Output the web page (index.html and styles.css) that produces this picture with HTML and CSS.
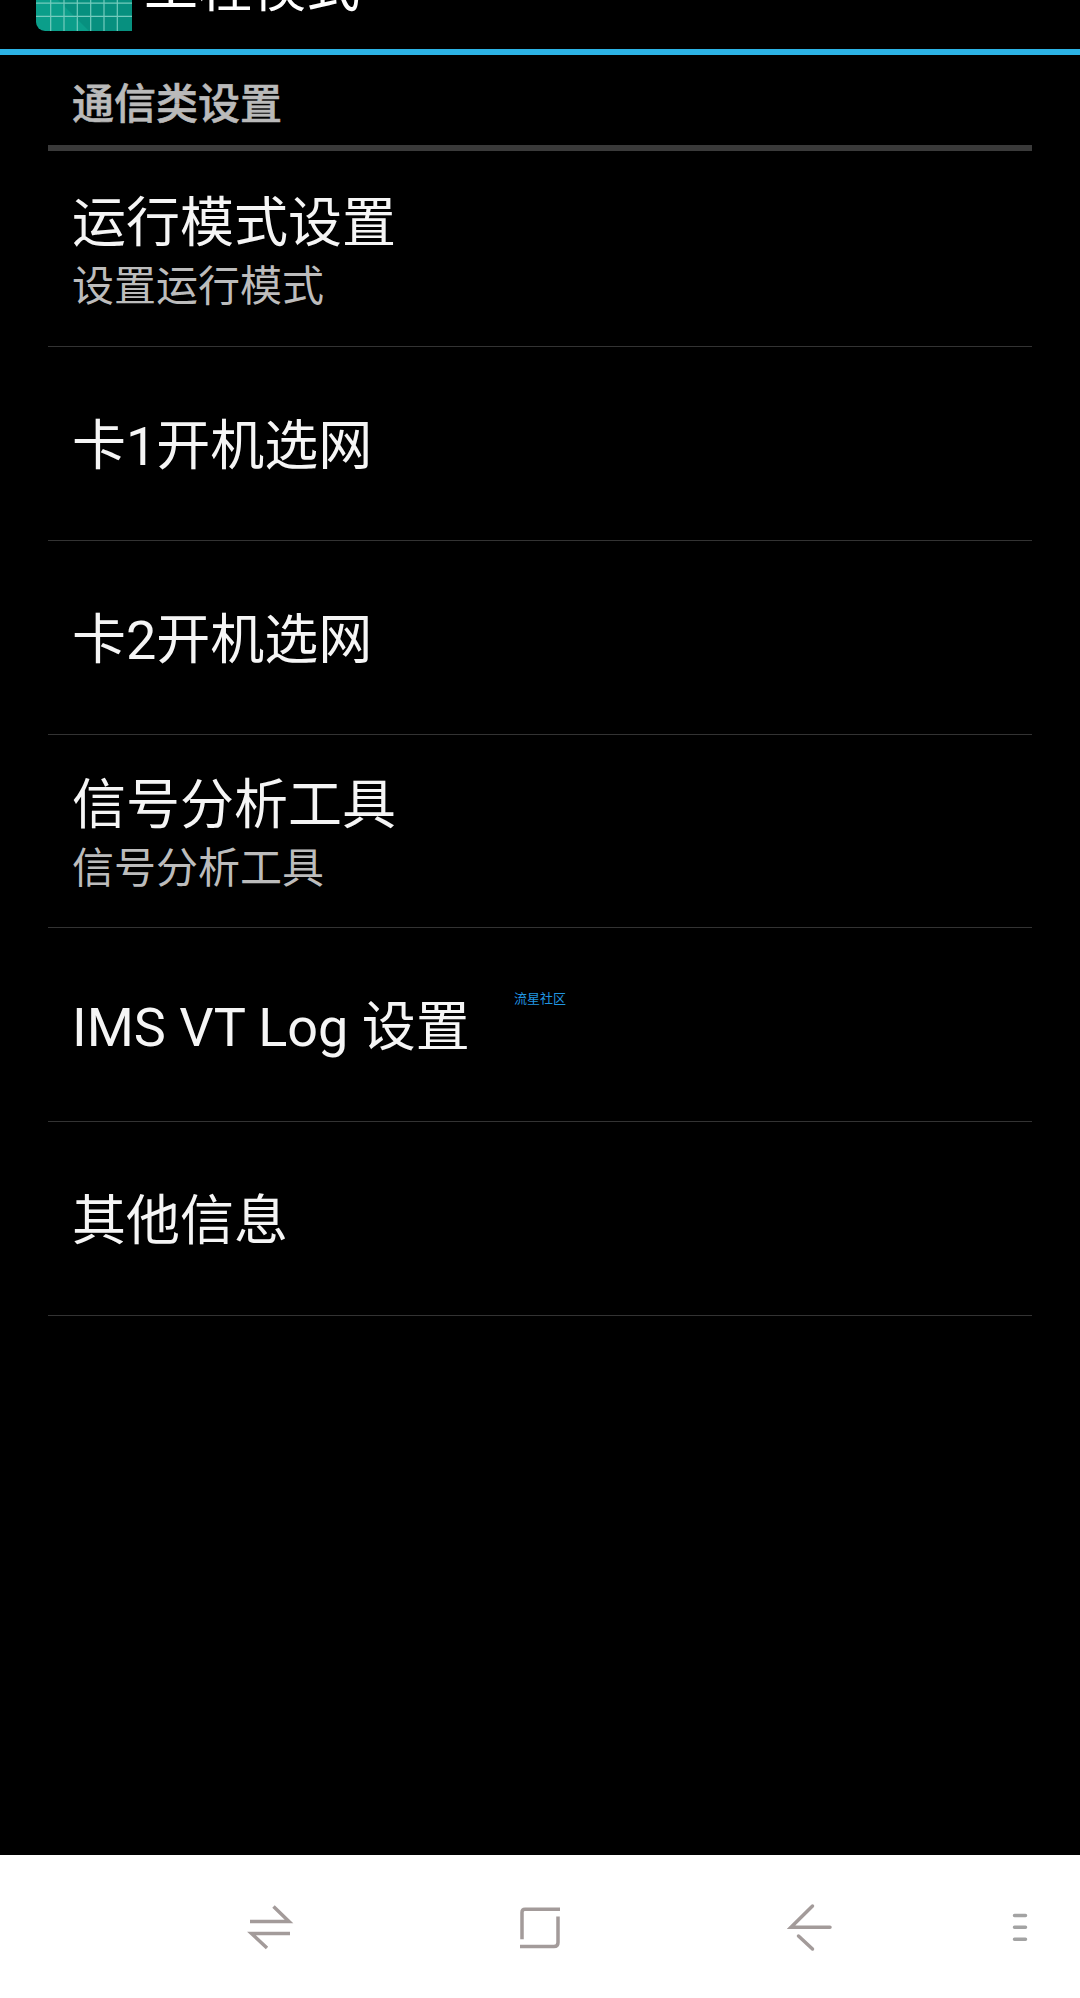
FILE: index.html
```html
<!DOCTYPE html>
<html lang="zh-CN">
<head>
    <meta charset="UTF-8">
    <meta name="viewport" content="width=device-width, initial-scale=1.0">
    <title>工程模式</title>
    <link rel="stylesheet" href="styles.css">
</head>
<body>

    <div class="action-bar">
        <svg class="app-icon" viewBox="0 0 96 96">
            <rect width="96" height="96" rx="9" fill="#0b9e8a"/>
            <path d="M0 0H96V96H53L0 43Z" fill="#07907f"/>
            <path d="M14.700 0V96M28 0V96M41.300 0V96M54.700 0V96M68 0V96M81.300 0V96M0 15H96M0 28.200H96M0 41.500H96M0 54.800H96M0 68.100H96M0 81.400H96" stroke="#74cbbd" stroke-width="1.200" fill="none"/>
        </svg>
        <span class="app-title">工程模式</span>
    </div>

    <div class="settings">
        <div class="group-title">通信类设置</div>

        <div class="item">
            <span class="item-title">运行模式设置</span>
            <span class="item-sub">设置运行模式</span>
        </div>
        <div class="item">
            <span class="item-title">卡1开机选网</span>
        </div>
        <div class="item">
            <span class="item-title">卡2开机选网</span>
        </div>
        <div class="item">
            <span class="item-title">信号分析工具</span>
            <span class="item-sub">信号分析工具</span>
        </div>
        <div class="item">
            <span class="item-title">IMS VT Log 设置</span>
            <span class="watermark">流星社区</span>
        </div>
        <div class="item">
            <span class="item-title">其他信息</span>
        </div>
    </div>

    <div class="nav-bar">
        <svg class="nav-icon" viewBox="0 0 42 44">
            <path d="M0 16.500H39L23.500 1.500M40 28.500H1.500L17 43" fill="none" stroke="#a39b9a" stroke-width="3.500"/>
        </svg>
        <svg class="nav-icon" viewBox="0 0 42 44">
            <path d="M40 4.200H5Q2 4.200 2 7.200V34.200M0 41.500H34Q38 41.500 38 37.500V11.500" fill="none" stroke="#a39b9a" stroke-width="3.500"/>
        </svg>
        <svg class="nav-icon" viewBox="0 0 42 44">
            <path d="M22.500 1L1 22.200H40M8.500 31L22.500 44" fill="none" stroke="#a39b9a" stroke-width="3.500" stroke-linecap="round"/>
        </svg>
        <svg class="nav-menu" viewBox="0 0 14 32">
            <path d="M1.500 4.500H12.500M1.500 16.200H12.500M1.500 28.200H12.500" fill="none" stroke="#a3a3a3" stroke-width="3.500" stroke-linecap="round"/>
        </svg>
    </div>

</body>
</html>
```

FILE: styles.css
```css
* {
    box-sizing: border-box;
    margin: 0;
    padding: 0;
}
html, body {
    height: 100%;
}
body {
    display: flex;
    flex-direction: column;
    background-color: #000;
    font-family: Roboto, "Noto Sans CJK SC", sans-serif;
    overflow: hidden;
}

.action-bar {
    flex: none;
    height: 55px;
    display: flex;
    align-items: flex-end;
    padding-left: 36px;
    border-bottom: 6px solid #2cb3e5;
    overflow: hidden;
}
.app-icon {
    flex: none;
    width: 96px;
    height: 96px;
    margin-bottom: 18px;
}
.app-title {
    flex: none;
    margin-left: 12px;
    margin-bottom: 28px;
    font-size: 54px;
    line-height: 64px;
    color: #fff;
}

.settings {
    flex: 1;
    padding: 0 48px;
}
.group-title {
    height: 96px;
    padding: 22px 0 0 24px;
    border-bottom: 6px solid #3a3a3a;
    font-size: 42px;
    line-height: 56px;
    font-weight: 500;
    -webkit-text-stroke: 0.6px #bababa;
    color: #bababa;
}
.item {
    position: relative;
    height: 193.800px;
    display: flex;
    flex-direction: column;
    justify-content: center;
    padding-top: 7px;
    padding-left: 24px;
    border-bottom: 1.500px solid #333;
}
.group-title + .item {
    height: 196px;
}
.item-title {
    font-size: 54px;
    line-height: 64px;
    color: #f5f5f5;
}
.item-sub {
    margin-bottom: -6px;
    font-size: 42px;
    line-height: 62px;
    color: #bcbcbc;
}
.watermark {
    position: absolute;
    left: 466px;
    top: 64px;
    font-size: 13px;
    line-height: 14px;
    color: #2196e0;
}

.nav-bar {
    flex: none;
    height: 143px;
    display: flex;
    align-items: center;
    background-color: #fff;
    padding-left: 250px;
}
.nav-icon {
    flex: none;
    width: 42px;
    height: 44px;
    margin-right: 228px;
    overflow: visible;
}
.nav-menu {
    flex: none;
    width: 14px;
    height: 32px;
    margin-left: -47px;
    overflow: visible;
}
```
